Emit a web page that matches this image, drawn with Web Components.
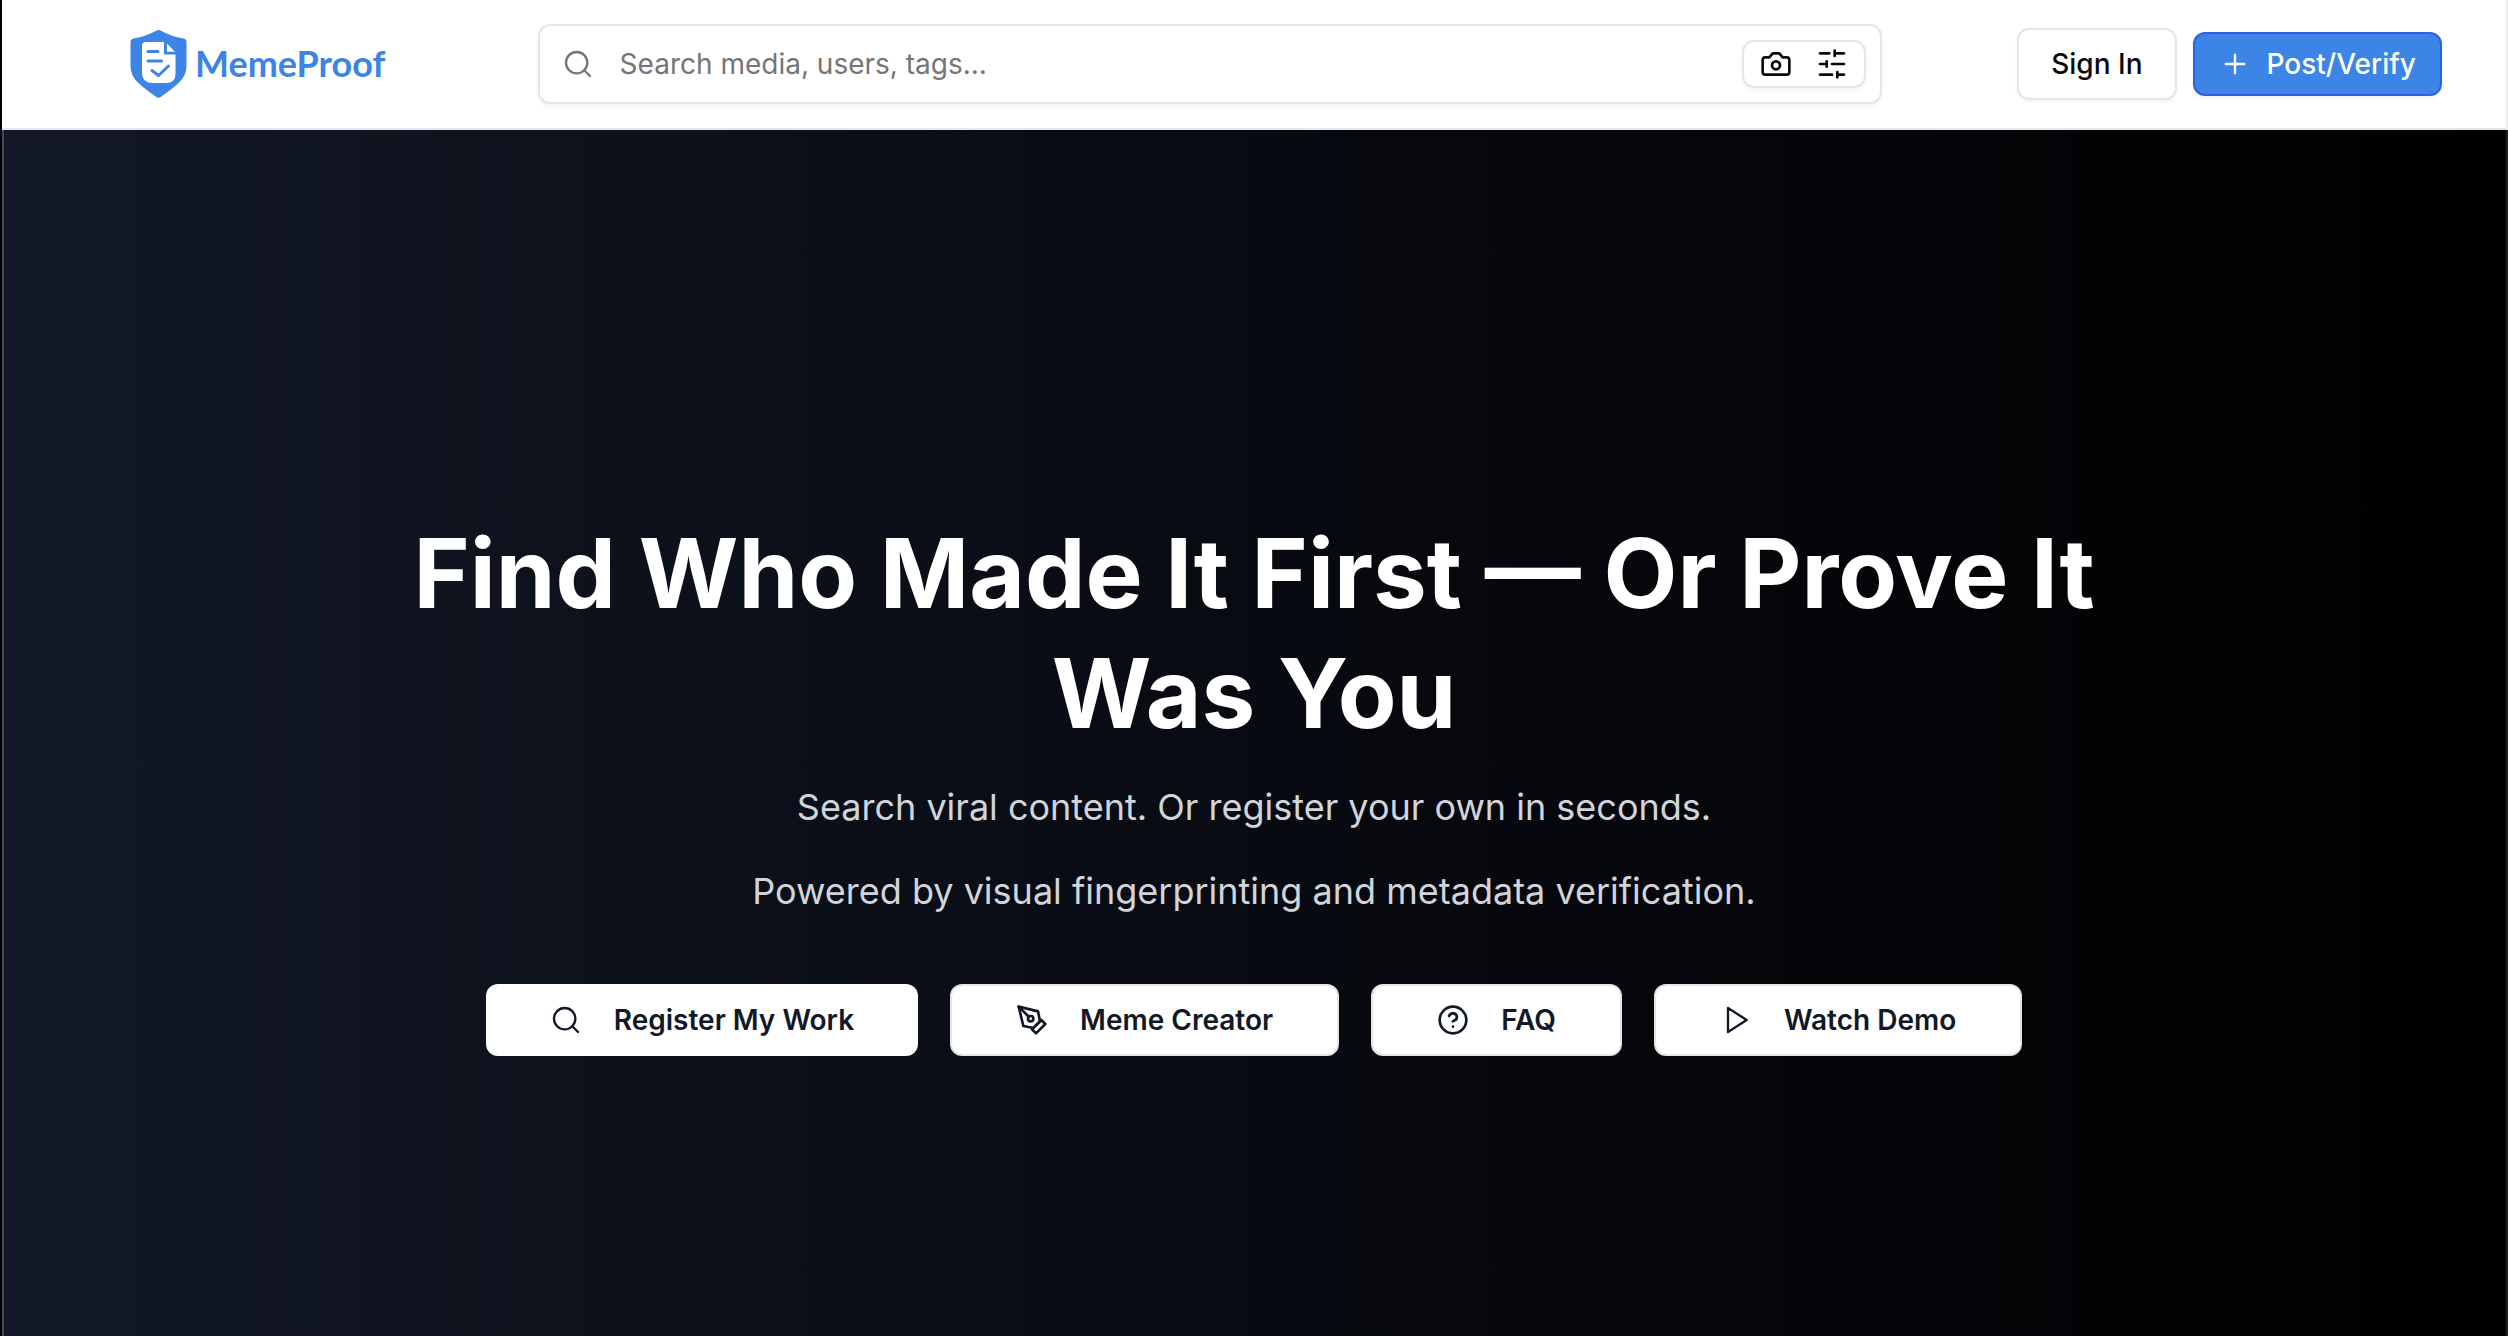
<!DOCTYPE html>
<html lang="en">
<head>
<meta charset="utf-8">
<title>MemeProof</title>
<style>
html, body { height: 100%; }
body { margin: 0; font-family: Inter, "Liberation Sans", sans-serif; background: #000; }
</style>
</head>
<body>
<mp-app></mp-app>
<script>
const ICONS = {
  search: '<circle cx="11" cy="11" r="8"/><path d="m21 21-4.3-4.3"/>',
  camera: '<path d="M14.5 4h-5L7 7H4a2 2 0 0 0-2 2v9a2 2 0 0 0 2 2h16a2 2 0 0 0 2-2V9a2 2 0 0 0-2-2h-3l-2.5-3z"/><circle cx="12" cy="13" r="3"/>',
  sliders: '<path d="M21 4h-7M10 4H3M21 12h-9M8 12H3M21 20h-5M12 20H3M14 2v4M8 10v4M16 18v4"/>',
  plus: '<path d="M5 12h14M12 5v14"/>',
  pen: '<path d="m12 19 7-7 3 3-7 7-3-3z"/><path d="m18 13-1.5-7.5L2 2l3.5 14.5L13 18l5-5z"/><path d="m2 2 7.586 7.586"/><circle cx="11" cy="11" r="2"/>',
  help: '<circle cx="12" cy="12" r="10"/><path d="M9.09 9a3 3 0 0 1 5.83 1c0 2-3 3-3 3M12 17h.01"/>',
  play: '<path d="m6 3 14 9-14 9V3z"/>'
};

const define = (name, html, setup) => customElements.define(name, class extends HTMLElement {
  constructor() {
    super();
    this.attachShadow({ mode: 'open' }).innerHTML = html;
  }
  connectedCallback() { if (setup) setup(this, this.shadowRoot); }
});

define('mp-icon', `
  <style>
    :host { display: block; flex: none; width: 32px; height: 32px; }
    svg { display: block; width: 100%; height: 100%; fill: none; stroke: currentColor;
          stroke-width: 1.75; stroke-linecap: round; stroke-linejoin: round; }
    :host([bold]) svg { stroke-width: 2; }
  </style>
  <svg viewBox="0 0 24 24" aria-hidden="true"></svg>`,
  (el, root) => { root.querySelector('svg').innerHTML = ICONS[el.getAttribute('name')]; });

define('mp-logo', `
  <style>
    :host { display: block; }
    a { display: flex; align-items: center; gap: 8px; color: #3c84e5; text-decoration: none;
        font: 700 36px/48px Lato, sans-serif; }
    svg { display: block; width: 57px; height: 68px; }
    span { padding-bottom: 2px; }
  </style>
  <a href="#">
    <svg viewBox="0 0 57 68" aria-hidden="true">
      <path fill="#3c84e5" d="M26 .8Q28.500-.6 31 .8Q41 6.500 53.500 8.600Q56.500 9.200 56.500 12V35C56.500 43 53.500 48.500 48 53.500C43 58.500 37 62 31 66.800Q28.500 68.800 26 66.800C20 62 14 58.500 9 53.500C3.500 48.500.5 43 .5 35V12Q.5 9.200 3.500 8.600Q16 6.500 26 .8Z"/>
      <path fill="#fff" d="M15.500 12H34V24.500H45.500V44Q45.500 53 36 53H22Q12 52.500 12 43V15.500Q12 12 15.500 12Z"/>
      <path fill="#fff" d="M37 13.500L45 21.700H37Z"/>
      <path fill="none" stroke="#3c84e5" stroke-width="3" stroke-linecap="round" stroke-linejoin="round" d="M18 21.500H28M18 31H31.500M22 40.500L28.500 45.500L38.500 36"/>
    </svg>
    <span>MemeProof</span>
  </a>`);

define('mp-search', `
  <style>
    :host { display: block; }
    form { box-sizing: border-box; height: 80px; display: flex; align-items: center; gap: 26px;
           padding: 0 14px 0 22px; border: 2px solid #e5e5e5; border-radius: 12px; background: #fff;
           color: #757575; box-shadow: 0 2px 4px rgba(0,0,0,.05); }
    input { flex: 1; min-width: 0; border: 0; outline: 0; padding: 0; background: none;
            font: 400 28px/40px Inter, sans-serif; color: #0a0a0a; }
    input::placeholder { color: #757575; opacity: 1; }
    .tools { box-sizing: border-box; height: 48px; display: flex; align-items: center; gap: 24px; padding: 0 16px;
             border: 2px solid #e5e5e5; border-radius: 12px; box-shadow: 0 2px 4px rgba(0,0,0,.05); }
    button { border: 0; padding: 0; background: none; color: #0a0a0a; cursor: pointer; }
  </style>
  <form role="search">
    <mp-icon name="search"></mp-icon>
    <input type="text" aria-label="Search" placeholder="Search media, users, tags...">
    <div class="tools">
      <button type="button" aria-label="Search by image"><mp-icon bold name="camera"></mp-icon></button>
      <button type="button" aria-label="Filters"><mp-icon bold name="sliders"></mp-icon></button>
    </div>
  </form>`);

define('mp-button', `
  <style>
    :host { display: block; }
    button { box-sizing: border-box; height: 72px; display: flex; align-items: center; gap: 32px; cursor: pointer;
             border: 2px solid #e5e5e5; border-radius: 12px; background: #fff; white-space: nowrap;
             font: 600 28px/40px Inter, sans-serif; color: #111827; padding: 0 64px; }
    :host([variant=solid]) button { border: 0; }
    :host([variant=plain]) button, :host([variant=primary]) button {
      font-weight: 500; color: #0a0a0a; padding: 0 32px; box-shadow: 0 2px 4px rgba(0,0,0,.05); }
    :host([variant=primary]) button { height: 64px; gap: 16px; padding: 0 24px; color: #fff;
      background: #3c84e5; border-color: #2f5fe5; }
  </style>
  <button type="button"><slot name="icon"></slot><slot></slot></button>`);

define('mp-header', `
  <style>
    :host { display: block; background: #fff; border-bottom: 2px solid #e5e7eb; }
    header { box-sizing: border-box; height: 128px; display: flex; align-items: center; justify-content: space-between;
             padding: 0 64px 0 126px; }
    mp-logo { min-width: 272px; }
    mp-search { flex: 0 1 1344px; }
    nav { display: flex; align-items: center; gap: 16px; }
  </style>
  <header>
    <mp-logo></mp-logo>
    <mp-search></mp-search>
    <nav>
      <mp-button variant="plain">Sign In</mp-button>
      <mp-button variant="primary"><mp-icon slot="icon" name="plus"></mp-icon>Post/Verify</mp-button>
    </nav>
  </header>`);

define('mp-hero', `
  <style>
    :host { display: block; background: linear-gradient(to right, #121826, #07090f 56%, #000); }
    section { display: flex; flex-direction: column; align-items: center; text-align: center; padding: 383px 66px 64px 64px; }
    h1 { margin: 0; max-width: 1792px; font-size: 96px; line-height: 120px; font-weight: 700; color: #fff; }
    p { margin: 24px 0 0; font-size: 36px; line-height: 60px; color: #d1d5db; }
    .actions { display: flex; flex-wrap: wrap; justify-content: center; gap: 32px; margin-top: 63px; }
  </style>
  <section>
    <h1>Find Who Made It First — Or Prove It Was You</h1>
    <p>Search viral content. Or register your own in seconds.</p>
    <p>Powered by visual fingerprinting and metadata verification.</p>
    <div class="actions">
      <mp-button variant="solid"><mp-icon slot="icon" name="search"></mp-icon>Register My Work</mp-button>
      <mp-button><mp-icon bold slot="icon" name="pen"></mp-icon>Meme Creator</mp-button>
      <mp-button><mp-icon bold slot="icon" name="help"></mp-icon>FAQ</mp-button>
      <mp-button><mp-icon slot="icon" name="play"></mp-icon>Watch Demo</mp-button>
    </div>
  </section>`);

define('mp-app', `
  <style>
    :host { box-sizing: border-box; min-height: 100%; display: flex; flex-direction: column;
            border-left: 2px solid #000; }
    .frame { flex: 1; display: flex; flex-direction: column; border: solid #414755; border-width: 0 2px; border-right-color: #222; }
    mp-header { margin: 0 -2px; padding: 0 0 0 2px; border-right: 2px solid #eee; }
    mp-hero { flex: 1; }
  </style>
  <div class="frame"><mp-header></mp-header><mp-hero></mp-hero></div>`);
</script>
</body>
</html>
